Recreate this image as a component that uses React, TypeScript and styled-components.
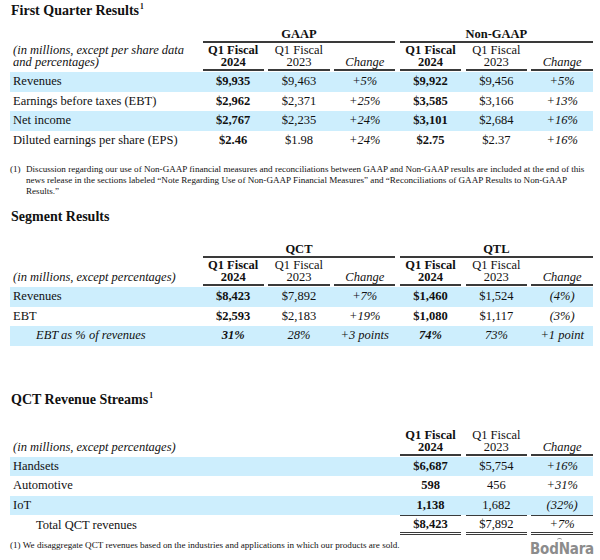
import React from "react";
import styled, { createGlobalStyle } from "styled-components";

const GlobalStyle = createGlobalStyle`
  html, body { margin: 0; padding: 0; background: #ffffff; }
  body {
    font-family: "Liberation Serif", "Times New Roman", serif;
    color: #111111;
  }
`;

const COLS = "188px repeat(6, 61.3px)";
const SHADE = "#cdeefd";
const RULE = "#3a3a3a";

const Page = styled.div`
  width: 600px;
  height: 560px;
  box-sizing: border-box;
  padding-left: 10px;
  overflow: hidden;
  display: flex;
  flex-direction: column;
`;

const SectionTitle = styled.h2<{ $top: number }>`
  margin: ${(p) => p.$top}px 0 0 1px;
  font-size: 14px;
  line-height: 16px;
  font-weight: 700;
`;

const Sup = styled.sup`
  font-size: 7.5px;
  line-height: 0;
  vertical-align: 6px;
  margin-left: 1px;
`;

const Table = styled.div<{ $top: number }>`
  margin-top: ${(p) => p.$top}px;
  width: 583px;
  font-size: 12.5px;
`;

const GridRow = styled.div`
  display: grid;
  grid-template-columns: ${COLS};
  column-gap: 4.5px;
`;

const GroupRow = styled(GridRow)``;

const GroupHead = styled.div<{ $col: number }>`
  grid-column: ${(p) => p.$col} / span 3;
  border-bottom: 2px solid ${RULE};
  font-weight: 700;
  line-height: 14px;
  text-align: center;
`;

const HeadRow = styled(GridRow)`
  align-items: end;
`;

const HeadLabel = styled.div`
  grid-column: 1;
  font-style: italic;
  line-height: 12px;
  padding: 0 0 3px 3px;
`;

const HeadCell = styled.div<{ $col: number; $bold?: boolean; $italic?: boolean }>`
  grid-column: ${(p) => p.$col};
  align-self: stretch;
  display: flex;
  flex-direction: column;
  justify-content: flex-end;
  align-items: center;
  padding: 1px 0 1px;
  border-bottom: 2px solid ${RULE};
  line-height: 12px;
  font-weight: ${(p) => (p.$bold ? 700 : 400)};
  font-style: ${(p) => (p.$italic ? "italic" : "normal")};
`;

const Body = styled.div`
  padding-top: 1px;
`;

const DataRow = styled(GridRow)<{ $shade?: boolean }>`
  height: 19.5px;
  line-height: 19.5px;
  background: ${(p) => (p.$shade ? SHADE : "transparent")};
`;

const TotalRow = styled(GridRow)`
  line-height: 16px;
`;

const Label = styled.div<{ $indent?: boolean; $italic?: boolean }>`
  grid-column: 1;
  padding-left: ${(p) => (p.$indent ? 26 : 3)}px;
  font-style: ${(p) => (p.$italic ? "italic" : "normal")};
  white-space: nowrap;
  align-self: center;
`;

const Cell = styled.div<{ $col: number; $bold?: boolean; $italic?: boolean; $total?: boolean }>`
  grid-column: ${(p) => p.$col};
  text-align: center;
  white-space: nowrap;
  font-weight: ${(p) => (p.$bold ? 700 : 400)};
  font-style: ${(p) => (p.$italic ? "italic" : "normal")};
  border-top: ${(p) => (p.$total ? `1.5px solid ${RULE}` : "none")};
  border-bottom: ${(p) => (p.$total ? `3px double ${RULE}` : "none")};
`;

const Footnote = styled.div<{ $top: number }>`
  margin-top: ${(p) => p.$top}px;
  display: flex;
  font-size: 9.1px;
  line-height: 11px;
  width: 582px;
`;

const NoteMarker = styled.span`
  flex: 0 0 16px;
`;

const NoteText = styled.span`
  flex: 1;
  white-space: nowrap;
`;

const BottomRow = styled.div`
  margin-top: 5px;
  display: flex;
  justify-content: space-between;
  align-items: flex-start;
  width: 584px;
`;

const SmallNote = styled.span`
  font-size: 9.1px;
  line-height: 11px;
  white-space: nowrap;
`;

const Logo = styled.span`
  position: relative;
  margin-top: 1px;
  font-family: "DejaVu Sans Condensed", "DejaVu Sans", "Liberation Sans", sans-serif;
  font-weight: 700;
  font-size: 15px;
  line-height: 16px;
  color: #8c8c8c;
  letter-spacing: -0.2px;
  &::before {
    content: "";
    position: absolute;
    left: 27px;
    top: -3px;
    width: 5px;
    height: 3px;
    border-top: 1.5px solid #8c8c8c;
    border-radius: 50% 50% 0 0;
  }
`;

type Row = {
  label: string;
  values: string[];
  shade?: boolean;
  indent?: boolean;
  italic?: boolean;
  total?: boolean;
};

type TableProps = {
  top: number;
  groups?: string[];
  headLabel: React.ReactNode;
  rows: Row[];
  startCol: number;
};

const FinancialTable: React.FC<TableProps> = ({ top, groups, headLabel, rows, startCol }) => {
  const nGroups = rows[0].values.length / 3;
  const heads: React.ReactNode[] = [];
  for (let g = 0; g < nGroups; g++) {
    const base = startCol + g * 3;
    heads.push(
      <HeadCell key={`h${g}a`} $col={base} $bold>
        <span>Q1 Fiscal</span>
        <span>2024</span>
      </HeadCell>,
      <HeadCell key={`h${g}b`} $col={base + 1}>
        <span>Q1 Fiscal</span>
        <span>2023</span>
      </HeadCell>,
      <HeadCell key={`h${g}c`} $col={base + 2} $italic>
        <span>Change</span>
      </HeadCell>
    );
  }
  return (
    <Table $top={top}>
      {groups && (
        <GroupRow>
          {groups.map((g, i) => (
            <GroupHead key={g} $col={startCol + i * 3}>
              {g}
            </GroupHead>
          ))}
        </GroupRow>
      )}
      <HeadRow>
        <HeadLabel>{headLabel}</HeadLabel>
        {heads}
      </HeadRow>
      <Body>
        {rows.map((r) => {
          const cells = r.values.map((v, i) => (
            <Cell
              key={i}
              $col={startCol + i}
              $bold={i % 3 === 0}
              $italic={r.italic || i % 3 === 2}
              $total={r.total}
            >
              {v}
            </Cell>
          ));
          const label = (
            <Label $indent={r.indent} $italic={r.italic}>
              {r.label}
            </Label>
          );
          return r.total ? (
            <TotalRow key={r.label}>
              {label}
              {cells}
            </TotalRow>
          ) : (
            <DataRow key={r.label} $shade={r.shade}>
              {label}
              {cells}
            </DataRow>
          );
        })}
      </Body>
    </Table>
  );
};

const quarterRows: Row[] = [
  { label: "Revenues", values: ["$9,935", "$9,463", "+5%", "$9,922", "$9,456", "+5%"], shade: true },
  { label: "Earnings before taxes (EBT)", values: ["$2,962", "$2,371", "+25%", "$3,585", "$3,166", "+13%"] },
  { label: "Net income", values: ["$2,767", "$2,235", "+24%", "$3,101", "$2,684", "+16%"], shade: true },
  { label: "Diluted earnings per share (EPS)", values: ["$2.46", "$1.98", "+24%", "$2.75", "$2.37", "+16%"] },
];

const segmentRows: Row[] = [
  { label: "Revenues", values: ["$8,423", "$7,892", "+7%", "$1,460", "$1,524", "(4%)"], shade: true },
  { label: "EBT", values: ["$2,593", "$2,183", "+19%", "$1,080", "$1,117", "(3%)"] },
  {
    label: "EBT as % of revenues",
    values: ["31%", "28%", "+3 points", "74%", "73%", "+1 point"],
    shade: true,
    indent: true,
    italic: true,
  },
];

const streamRows: Row[] = [
  { label: "Handsets", values: ["$6,687", "$5,754", "+16%"], shade: true },
  { label: "Automotive", values: ["598", "456", "+31%"] },
  { label: "IoT", values: ["1,138", "1,682", "(32%)"], shade: true },
  { label: "Total QCT revenues", values: ["$8,423", "$7,892", "+7%"], indent: true, total: true },
];

export default function App() {
  return (
    <Page>
      <GlobalStyle />
      <SectionTitle $top={3}>
        First Quarter Results<Sup>1</Sup>
      </SectionTitle>
      <FinancialTable
        top={8}
        groups={["GAAP", "Non-GAAP"]}
        headLabel={
          <>
            (in millions, except per share data
            <br />
            and percentages)
          </>
        }
        rows={quarterRows}
        startCol={2}
      />
      <Footnote $top={14}>
        <NoteMarker>(1)</NoteMarker>
        <NoteText>
          Discussion regarding our use of Non-GAAP financial measures and reconciliations between GAAP and
          Non-GAAP results are included at the end of this
          <br />
          news release in the sections labeled “Note Regarding Use of Non-GAAP Financial Measures” and
          “Reconciliations of GAAP Results to Non-GAAP
          <br />
          Results.”
        </NoteText>
      </Footnote>
      <SectionTitle $top={12}>Segment Results</SectionTitle>
      <FinancialTable
        top={17}
        groups={["QCT", "QTL"]}
        headLabel="(in millions, except percentages)"
        rows={segmentRows}
        startCol={2}
      />
      <SectionTitle $top={46}>
        QCT Revenue Streams<Sup>1</Sup>
      </SectionTitle>
      <FinancialTable
        top={20}
        headLabel="(in millions, except percentages)"
        rows={streamRows}
        startCol={5}
      />
      <BottomRow>
        <SmallNote>
          (1) We disaggregate QCT revenues based on the industries and applications in which our products are
          sold.
        </SmallNote>
        <Logo>BodNara</Logo>
      </BottomRow>
    </Page>
  );
}
